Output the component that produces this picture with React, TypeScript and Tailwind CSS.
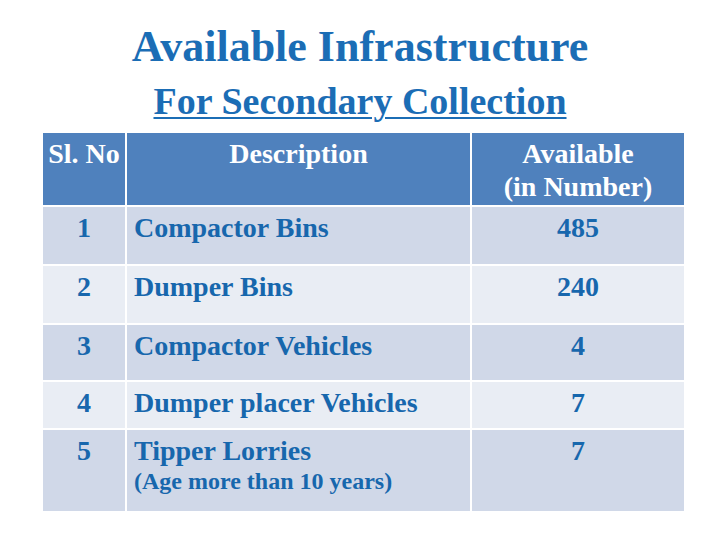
const rows = [
  { no: '1', desc: 'Compactor Bins', count: '485', h: 'h-[57px]', dark: true },
  { no: '2', desc: 'Dumper Bins', count: '240', h: 'h-[57px]', dark: false },
  { no: '3', desc: 'Compactor Vehicles', count: '4', h: 'h-[55px]', dark: true },
  { no: '4', desc: 'Dumper placer Vehicles', count: '7', h: 'h-[46px]', dark: false },
  { no: '5', desc: 'Tipper Lorries', note: '(Age more than 10 years)', count: '7', h: 'h-[81px]', dark: true },
];

export default function App() {
  return (
    <div className="h-[540px] w-[720px] bg-white font-[family-name:'Liberation_Serif','Times_New_Roman',serif] font-bold">
      {/* Title */}
      <div className="flex flex-col items-center pt-[21px] text-[#1b6db5]">
        <h1 className="text-[44px] leading-[52px]">Available Infrastructure</h1>
        <h2 className="mt-[6px] text-[38px] leading-[44px] underline decoration-2 underline-offset-[3px]">
          For Secondary Collection
        </h2>
      </div>

      {/* Table */}
      <div className="mt-[10px] ml-[43px] grid w-[641px] grid-cols-[82px_343px_212px] gap-[2px] bg-white text-[28px] leading-[33px]">
        <div className="h-[72px] bg-[#4f81bd] pt-[4px] text-center text-white">Sl. No</div>
        <div className="h-[72px] bg-[#4f81bd] pt-[4px] text-center text-white">Description</div>
        <div className="h-[72px] bg-[#4f81bd] pt-[4px] text-center text-white">
          Available
          <br />
          (in Number)
        </div>

        {rows.map((r) => {
          const bg = r.dark ? 'bg-[#d0d8e8]' : 'bg-[#e9edf4]';
          return (
            <div key={r.no} className="contents text-[#1767ad]">
              <div className={`${r.h} ${bg} pt-[4px] text-center`}>{r.no}</div>
              <div className={`${r.h} ${bg} pt-[4px] pl-[7px]`}>
                {r.desc}
                {r.note && <div className="text-[24px] leading-[28px]">{r.note}</div>}
              </div>
              <div className={`${r.h} ${bg} pt-[4px] text-center`}>{r.count}</div>
            </div>
          );
        })}
      </div>
    </div>
  );
}
